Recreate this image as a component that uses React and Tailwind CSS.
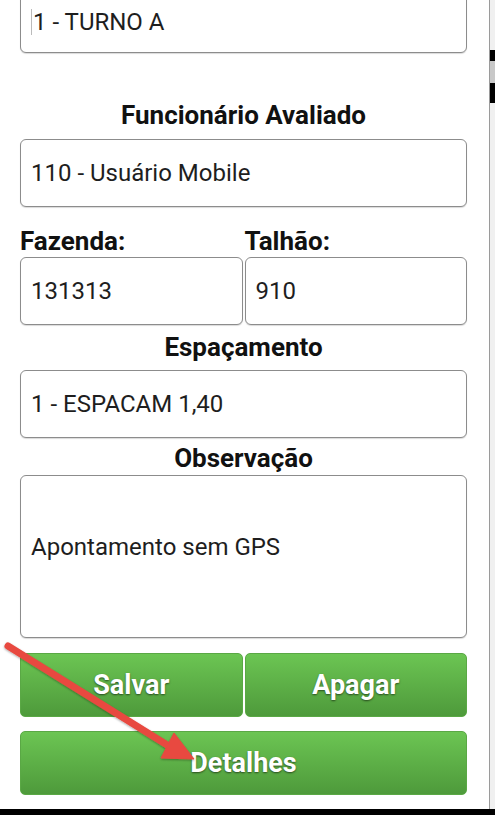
import React from 'react';

const font = { fontFamily: 'Roboto, "Noto Sans", sans-serif' };

const Field = ({ children, className = '' }) => (
  <div className={`flex items-center rounded-[6px] border border-[#8c8c8c] bg-white pl-[10px] text-[24px] leading-[28px] text-[#1e1e1e] shadow-[0_1px_1px_rgba(0,0,0,0.15)] ${className}`}>
    {children}
  </div>
);

const Label = ({ children, className = '' }) => (
  <div className={`h-[28px] text-center text-[26px] leading-[28px] font-bold text-[#111] ${className}`}>{children}</div>
);

const GreenButton = ({ children, className = '' }) => (
  <button className={`flex h-[64px] items-center justify-center rounded-[5px] border border-[#5aa845] bg-gradient-to-b from-[#6cc553] to-[#4e9a3b] text-[27px] font-bold text-white [text-shadow:0_1px_2px_rgba(0,0,0,0.55)] ${className}`}>
    {children}
  </button>
);

export default function App() {
  return (
    <div className="relative h-[815px] w-[495px] overflow-hidden bg-[#f2f2f2]" style={font}>
      <div className="flex h-[809px]">
        {/* form column */}
        <div className="flex w-[490px] flex-col border-r border-[#9a9a9a] bg-white pl-[20px] pr-[22px]">
          <Field className="-mt-[15px] h-[68px] pt-[6px]">
            <span className="mr-[1px] h-[26px] w-[1px] bg-[#bbb]" />
            1 - TURNO A
          </Field>

          <Label className="mt-[48px]">Funcionário Avaliado</Label>
          <Field className="mt-[10px] h-[68px]">110 - Usuário Mobile</Field>

          <div className="mt-[20px] grid grid-cols-2 gap-[2px]">
            <div>
              <div className="h-[28px] text-[26px] leading-[28px] font-bold text-[#111]">Fazenda:</div>
              <Field className="mt-[2px] h-[68px]">131313</Field>
            </div>
            <div>
              <div className="h-[28px] text-[26px] leading-[28px] font-bold text-[#111]">Talhão:</div>
              <Field className="mt-[2px] h-[68px]">910</Field>
            </div>
          </div>

          <Label className="mt-[8px]">Espaçamento</Label>
          <Field className="mt-[9px] h-[68px]">1 - ESPACAM 1,40</Field>

          <Label className="mt-[6px]">Observação</Label>
          <Field className="mt-[3px] h-[163px] items-start pt-[57px]">Apontamento sem GPS</Field>

          <div className="mt-[15px] grid grid-cols-2 gap-[2px]">
            <GreenButton>Salvar</GreenButton>
            <GreenButton>Apagar</GreenButton>
          </div>
          <GreenButton className="mt-[14px]">Detalhes</GreenButton>
        </div>

        {/* scroll edge */}
        <div className="flex w-[5px] flex-col bg-[#f0f0f0]">
          <div className="mt-[50px] h-[11px] bg-black" />
          <div className="h-[22px] bg-[#c8c8c8]" />
          <div className="h-[20px] bg-black" />
        </div>
      </div>
      <div className="h-[6px] bg-black" />

      {/* annotation arrow */}
      <svg className="pointer-events-none absolute left-0 top-0" width="495" height="815">
        <defs>
          <filter id="sh" x="-10%" y="-10%" width="120%" height="120%">
            <feDropShadow dx="0" dy="1" stdDeviation="1.2" floodColor="#000" floodOpacity="0.35" />
          </filter>
        </defs>
        <g filter="url(#sh)" fill="#e8483f" stroke="#e8483f">
          <line x1="8" y1="646" x2="172" y2="748" strokeWidth="7" strokeLinecap="round" />
          <polygon points="174,733 161,758 194,759" strokeWidth="1" strokeLinejoin="round" />
        </g>
      </svg>
    </div>
  );
}
